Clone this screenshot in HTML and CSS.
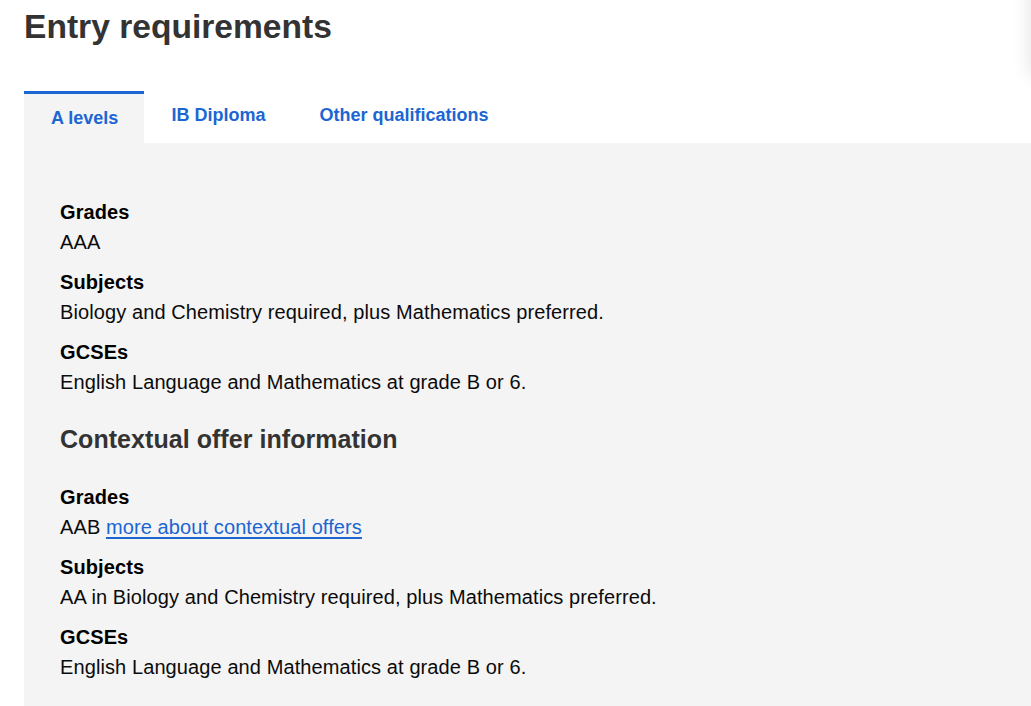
FILE: index.html
```html
<!DOCTYPE html>
<html lang="en">
<head>
<meta charset="utf-8">
<title>Entry requirements</title>
<link rel="stylesheet" href="styles.css">
</head>
<body>
<div class="edge-shadow" aria-hidden="true"></div>
<main class="page">
  <h2 class="title">Entry requirements</h2>
  <nav class="tabs">
    <a class="tab tab-active" href="#">A levels</a>
    <a class="tab" href="#">IB Diploma</a>
    <a class="tab" href="#">Other qualifications</a>
  </nav>
  <section class="panel">
    <div class="item">
      <div class="label">Grades</div>
      <div class="value">AAA</div>
    </div>
    <div class="item">
      <div class="label">Subjects</div>
      <div class="value">Biology and Chemistry required, plus Mathematics preferred.</div>
    </div>
    <div class="item">
      <div class="label">GCSEs</div>
      <div class="value">English Language and Mathematics at grade B or 6.</div>
    </div>
    <h3 class="subtitle">Contextual offer information</h3>
    <div class="item">
      <div class="label">Grades</div>
      <div class="value">AAB <a class="link" href="#">more about contextual offers</a></div>
    </div>
    <div class="item">
      <div class="label">Subjects</div>
      <div class="value">AA in Biology and Chemistry required, plus Mathematics preferred.</div>
    </div>
    <div class="item">
      <div class="label">GCSEs</div>
      <div class="value">English Language and Mathematics at grade B or 6.</div>
    </div>
  </section>
</main>
</body>
</html>
```

FILE: styles.css
```css
html, body {
  margin: 0;
  padding: 0;
  background: #fff;
  font-family: "Liberation Sans", Arial, sans-serif;
  color: #0b0b0b;
  overflow: hidden;
}

.page {
  padding-left: 24px;
}

.title {
  margin: 8px 0 0;
  font-size: 33.6px;
  line-height: 38px;
  font-weight: 700;
  color: #333;
}

.tabs {
  display: flex;
  align-items: flex-start;
  margin-top: 45px;
}

.tab {
  display: block;
  padding: 14px 27px;
  font-size: 18px;
  line-height: 21px;
  font-weight: 700;
  color: #1b66d2;
  text-decoration: none;
}

.tab-active {
  border-top: 3px solid #1b66d2;
  background: #f4f4f4;
  padding-right: 26px;
}

.panel {
  background: #f4f4f4;
  padding: 54px 36px 40px;
}

.item {
  margin-bottom: 10px;
}

.label {
  font-size: 20px;
  line-height: 30px;
  font-weight: 700;
  color: #000;
  letter-spacing: 0.1px;
}

.value {
  font-size: 20px;
  line-height: 30px;
  color: #0b0b0b;
  letter-spacing: 0.1px;
}

.link {
  color: #1b66d2;
  text-decoration: underline;
  text-underline-offset: 3px;
}

.subtitle {
  margin: 27px 0 28px;
  font-size: 25px;
  line-height: 30px;
  font-weight: 700;
  color: #333;
  letter-spacing: 0.05px;
}

.edge-shadow {
  position: fixed;
  top: -20px;
  left: 100%;
  width: 60px;
  height: 95px;
  box-shadow: 0 0 18px rgba(0, 0, 0, 0.12);
  background: #fff;
}
```
